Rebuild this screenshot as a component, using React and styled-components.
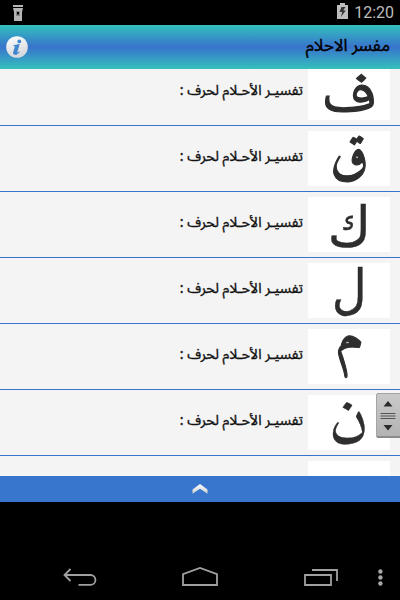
import React from 'react';
import styled, { createGlobalStyle } from 'styled-components';

const GlobalStyle = createGlobalStyle`
  body {
    margin: 0;
    background: #000;
  }
`;

const Screen = styled.div`
  width: 400px;
  height: 600px;
  display: flex;
  flex-direction: column;
  overflow: hidden;
  background: #000;
  font-family: 'Noto Sans Arabic', 'DejaVu Sans', sans-serif;

  svg {
    display: block;
    flex: none;
  }
`;

const StatusBar = styled.div`
  height: 25px;
  flex: none;
  display: flex;
  align-items: center;
  justify-content: space-between;
  padding: 0 6px 0 13px;
  box-sizing: border-box;
`;

const StatusRight = styled.div`
  display: flex;
  align-items: flex-start;
  gap: 6px;

  svg {
    margin-top: 3px;
  }
`;

const Clock = styled.span`
  font-family: Roboto, sans-serif;
  font-size: 16px;
  line-height: 25px;
  color: #bdbdbd;
`;

const TitleBar = styled.header`
  height: 44px;
  flex: none;
  display: flex;
  align-items: center;
  justify-content: space-between;
  padding: 0 10px 0 6px;
  box-sizing: border-box;
  background: linear-gradient(#33c1bd, #3873cc 50%, #33c1bd);
`;

const Title = styled.h1`
  margin: 0 0 2px;
  font-size: 16.8px;
  font-weight: 400;
  line-height: 24px;
  white-space: nowrap;
  color: #000;
  -webkit-text-stroke: 0.4px #000;
`;

const ListArea = styled.main`
  position: relative;
  height: 407px;
  flex: none;
  overflow: hidden;
  background: #f4f4f4;
`;

const List = styled.div`
  margin-top: -9px;
`;

const Row = styled.div`
  height: 66px;
  display: flex;
  align-items: flex-start;
  gap: 5px;
  padding: 5px 10px 0;
  box-sizing: border-box;
  border-bottom: 1px solid #3873cc;
`;

const Tile = styled.div`
  width: 82px;
  height: 55px;
  flex: none;
  background: #fff;
`;

const Label = styled.span`
  margin-top: 14px;
  font-size: 14.1px;
  line-height: 24px;
  white-space: nowrap;
  color: #111;
  -webkit-text-stroke: 0.35px #111;
`;

const Thumb = styled.div`
  position: absolute;
  top: 324px;
  right: 0;
  width: 24px;
  height: 45px;
`;

const Drawer = styled.div`
  height: 26px;
  flex: none;
  display: flex;
  align-items: center;
  justify-content: center;
  background: #3875cd;
`;

const NavBar = styled.nav`
  flex: 1;
  display: flex;
  align-items: flex-end;
  justify-content: flex-end;
`;

// each letter is stretched to its own size inside the 82x55 tile
const LETTERS = [
  { char: 'ف', font: 'Noto Naskh Arabic', x: 13.2, y: 47.2, sx: 1.305, sy: 1.12, stroke: 1.1 },
  { char: 'ق', font: 'Amiri', x: 22, y: 41.2, sx: 1.13, sy: 1.17, stroke: 0.9 },
  { char: 'ك', font: 'DejaVu Sans', x: 19.8, y: 48.8, sx: 1.05, sy: 1.11, stroke: 0.4 },
  { char: 'ل', font: 'DejaVu Sans', x: 23.8, y: 45, sx: 0.96, sy: 1.08, stroke: 0.4 },
  { char: 'م', font: 'Amiri', x: 25.9, y: 23.3, sx: 1.38, sy: 1, stroke: 0.8 },
  { char: 'ن', font: 'Amiri', x: 20.6, y: 45.2, sx: 1.41, sy: 1.24, stroke: 0.3 },
];

const Letter = ({ char, font, x, y, sx, sy, stroke }) => (
  <svg width="82" height="55" viewBox="0 0 82 55">
    <text
      transform={`translate(${x} ${y}) scale(${sx} ${sy})`}
      direction="ltr"
      fontFamily={`'${font}', 'DejaVu Sans', sans-serif`}
      fontSize="50"
      fill="#2e2e2e"
      stroke="#2e2e2e"
      strokeWidth={stroke}
    >
      {char}
    </text>
  </svg>
);

const FlashlightIcon = () => (
  <svg width="10" height="17" viewBox="0 0 10 17">
    <path d="M0 1h10v2H0z" fill="#b5b5b5" />
    <path d="M0 4h10L9 8v9H1V8z" fill="#b5b5b5" />
    <path d="M3 7h4v5H3z" fill="#888" />
    <path d="M4 8h2v2.500H4z" fill="#000" />
  </svg>
);

const BatteryIcon = () => (
  <svg width="11" height="16" viewBox="0 0 11 16">
    <path d="M3 0h5v2h3v14H0V2h3z" fill="#bdbdbd" />
    <path d="M4.500 4 2.500 9h2.800L3.800 14 8.800 7.600H6.200L8.500 4z" fill="#333" />
  </svg>
);

const InfoIcon = () => (
  <svg width="22" height="22" viewBox="0 0 22 22">
    <defs>
      <linearGradient id="info" x1="0" y1="0" x2="0.3" y2="1">
        <stop offset="0" stopColor="#fff" />
        <stop offset="1" stopColor="#d5d8dc" />
      </linearGradient>
    </defs>
    <circle cx="11" cy="11" r="10.8" fill="url(#info)" />
    <circle cx="13.3" cy="5.4" r="1.9" fill="#3f86cf" />
    <path
      d="M7.4 9.200c2-.2 3.700-.8 6.300-1.200l-2.400 8c-.2.900.3.900 1.900-.7l.5.600c-1.700 2.200-3.300 3-4.800 2.900-1.700-.1-2.100-1.300-1.700-2.700l1.500-4.700c.3-1-.1-1.300-1.500-1.300z"
      fill="#3f86cf"
    />
  </svg>
);

const ThumbIcon = () => (
  <svg width="24" height="45" viewBox="0 0 24 45">
    <defs>
      <linearGradient id="thumb" x1="0" y1="0" x2="0" y2="1">
        <stop offset="0" stopColor="#cacaca" />
        <stop offset="1" stopColor="#b2b2b2" />
      </linearGradient>
    </defs>
    <rect x="0.5" y="0.5" width="25" height="44" rx="1.5" fill="url(#thumb)" stroke="#a5a5a5" />
    <path d="M1 44h23" stroke="#808080" strokeWidth="1.5" />
    <path d="M7.500 13.500 12 8l4.500 5.500zM7.500 32l4.500 5.500 4.500-5.500z" fill="#2b2b2b" />
    <path d="M4.500 20.500h15M4.500 23h15M4.500 25.500h15" stroke="#555" />
  </svg>
);

const ChevronIcon = () => (
  <svg width="16" height="10" viewBox="0 0 16 10">
    <defs>
      <linearGradient id="chev" x1="0" y1="0" x2="0" y2="1">
        <stop offset="0" stopColor="#fff" />
        <stop offset="1" stopColor="#ccc" />
      </linearGradient>
    </defs>
    <path d="M.5 5.500 8 0l7.500 5.500v4.200L8 4.800.5 9.700z" fill="url(#chev)" />
  </svg>
);

const NavIcons = () => (
  <svg width="400" height="50" viewBox="0 0 400 50" fill="none" stroke="#a0a0a0" strokeWidth="1.8">
    <path d="M70.500 19 64.500 25l6 6M65 25h25.500a4.900 4.900 0 0 1 0 9.900H78.500" />
    <path d="M183 35V24.200L200 18l17 6.200V35z" />
    <path d="M305 25h26v10h-26zM312 20h25v11" />
    <g fill="#a8a8a8" stroke="none">
      <circle cx="380.400" cy="21.500" r="2.200" />
      <circle cx="380.400" cy="27.500" r="2.200" />
      <circle cx="380.400" cy="33.500" r="2.200" />
    </g>
  </svg>
);

const App = () => (
  <>
    <GlobalStyle />
    <Screen>
      <StatusBar>
        <FlashlightIcon />
        <StatusRight>
          <BatteryIcon />
          <Clock>12:20</Clock>
        </StatusRight>
      </StatusBar>
      <TitleBar>
        <InfoIcon />
        <Title dir="rtl">مفسر الاحلام</Title>
      </TitleBar>
      <ListArea>
        <List dir="rtl">
          {LETTERS.map((letter) => (
            <Row key={letter.char}>
              <Tile>
                <Letter {...letter} />
              </Tile>
              <Label>تفسيـر الأحـلام لحرف :</Label>
            </Row>
          ))}
          <Row>
            <Tile />
          </Row>
        </List>
        <Thumb>
          <ThumbIcon />
        </Thumb>
      </ListArea>
      <Drawer>
        <ChevronIcon />
      </Drawer>
      <NavBar>
        <NavIcons />
      </NavBar>
    </Screen>
  </>
);

export default App;
